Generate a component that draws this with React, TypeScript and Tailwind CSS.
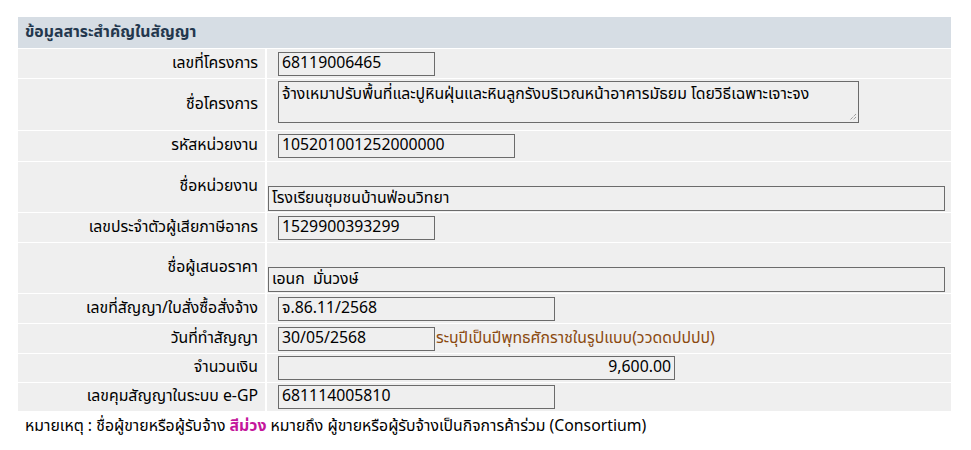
const rows: {
  label: string;
  h: string;
  kind: 'input' | 'area' | 'wide';
  value: string;
  w?: string;
  right?: boolean;
  hint?: string;
}[] = [
  { label: 'เลขที่โครงการ', h: 'h-[29px]', kind: 'input', value: '68119006465', w: 'w-[157px]' },
  {
    label: 'ชื่อโครงการ',
    h: 'h-[51px]',
    kind: 'area',
    value: 'จ้างเหมาปรับพื้นที่และปูหินฝุ่นและหินลูกรังบริเวณหน้าอาคารมัธยม โดยวิธีเฉพาะเจาะจง',
  },
  { label: 'รหัสหน่วยงาน', h: 'h-[30px]', kind: 'input', value: '105201001252000000', w: 'w-[237px]' },
  { label: 'ชื่อหน่วยงาน', h: 'h-[50px]', kind: 'wide', value: 'โรงเรียนชุมชนบ้านฟ่อนวิทยา' },
  { label: 'เลขประจำตัวผู้เสียภาษีอากร', h: 'h-[29px]', kind: 'input', value: '1529900393299', w: 'w-[157px]' },
  { label: 'ชื่อผู้เสนอราคา', h: 'h-[50px]', kind: 'wide', value: 'เอนก  มั่นวงษ์' },
  { label: 'เลขที่สัญญา/ใบสั่งซื้อสั่งจ้าง', h: 'h-[29px]', kind: 'input', value: 'จ.86.11/2568', w: 'w-[277px]' },
  {
    label: 'วันที่ทำสัญญา',
    h: 'h-[29px]',
    kind: 'input',
    value: '30/05/2568',
    w: 'w-[157px]',
    hint: 'ระบุปีเป็นปีพุทธศักราชในรูปแบบ(ววดดปปปป)',
  },
  { label: 'จำนวนเงิน', h: 'h-[28px]', kind: 'input', value: '9,600.00', w: 'w-[397px]', right: true },
  { label: 'เลขคุมสัญญาในระบบ e-GP', h: 'h-[28px]', kind: 'input', value: '681114005810', w: 'w-[277px]' },
];

export default function App() {
  return (
    <div className="min-h-[450px] bg-white pt-[17px] text-[15.8px] leading-none text-black [font-family:Tahoma,'Noto_Sans_Thai','Noto_Sans',sans-serif]">
      <div className="ml-[18px] w-[933px]">
        {/* section header */}
        <div className="flex h-[31px] items-center bg-[#d6dde4] px-[7px] font-bold text-[#23374d]">
          ข้อมูลสาระสำคัญในสัญญา
        </div>

        <div className="mt-px flex flex-col gap-px">
          {rows.map((r) => (
            <div key={r.label} className={`grid grid-cols-[247px_1fr] gap-[2px] ${r.h}`}>
              <div className="flex items-center justify-end bg-[#efefef] pr-[7px]">{r.label}</div>
              <div className="flex bg-[#efefef] pl-px">
                {r.kind === 'input' && (
                  <div className="flex items-center">
                    <div
                      className={`ml-[10px] flex h-[24px] items-center border border-[#6b6b6b] px-[3px] ${r.w} ${r.right ? 'justify-end' : ''}`}
                    >
                      {r.value}
                    </div>
                    {r.hint && <span className="ml-px text-[#8b4a10]">{r.hint}</span>}
                  </div>
                )}
                {r.kind === 'area' && (
                  <div className="relative ml-[10px] mt-[2px] h-[42px] w-[581px] border border-[#6b6b6b] px-[3px] pt-[5px]">
                    {r.value}
                    <svg className="absolute bottom-[1px] right-[1px]" width="9" height="9" viewBox="0 0 9 9">
                      <path d="M8 2 L2 8 M8 5 L5 8" stroke="#777" strokeWidth="1" strokeDasharray="1 1" />
                    </svg>
                  </div>
                )}
                {r.kind === 'wide' && (
                  <div className="flex items-end pb-px">
                    <div className="flex h-[25px] w-[677px] items-center whitespace-pre border border-[#6b6b6b] px-[3px]">
                      {r.value}
                    </div>
                  </div>
                )}
              </div>
            </div>
          ))}
        </div>

        <div className="mt-[8px] pl-[7px]">
          หมายเหตุ : ชื่อผู้ขายหรือผู้รับจ้าง <span className="font-bold text-[#c4169c]">สีม่วง</span> หมายถึง
          ผู้ขายหรือผู้รับจ้างเป็นกิจการค้าร่วม (Consortium)
        </div>
      </div>
    </div>
  );
}
